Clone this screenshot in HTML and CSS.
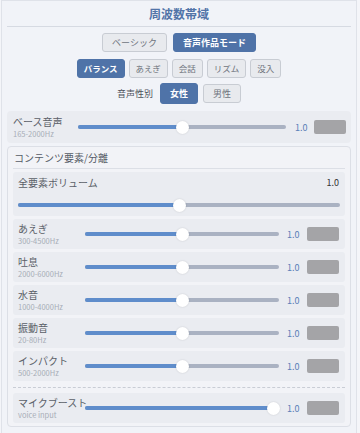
FILE: index.html
```html
<!DOCTYPE html>
<html lang="ja">
<head>
    <meta charset="UTF-8">
    <meta name="viewport" content="width=device-width, initial-scale=1.0">
    <title>周波数帯域</title>
    <link rel="stylesheet" href="styles.css">
</head>
<body>

    <div class="panel">
        <h2 class="title">周波数帯域</h2>

        <div class="btn-row row-mode">
            <button class="btn">ベーシック</button>
            <button class="btn active">音声作品モード</button>
        </div>

        <div class="btn-row row-preset">
            <button class="btn small active">バランス</button>
            <button class="btn small">あえぎ</button>
            <button class="btn small">会話</button>
            <button class="btn small">リズム</button>
            <button class="btn small">没入</button>
        </div>

        <div class="btn-row row-gender">
            <span class="row-label">音声性別</span>
            <button class="btn tall active">女性</button>
            <button class="btn">男性</button>
        </div>

        <div class="band band-base">
            <div class="band-name">
                <div class="band-label">ベース音声</div>
                <div class="band-range">165-2000Hz</div>
            </div>
            <div class="slider" style="--p:.5"><div class="slider-fill"></div><div class="slider-thumb"></div></div>
            <span class="band-value">1.0</span>
            <span class="swatch"></span>
        </div>

        <section class="group">
            <div class="group-title">コンテンツ要素/分離</div>

            <div class="master">
                <div class="master-head">
                    <span class="band-label">全要素ボリューム</span>
                    <span class="master-value">1.0</span>
                </div>
                <div class="slider" style="--p:.5"><div class="slider-fill"></div><div class="slider-thumb"></div></div>
            </div>

            <div class="band">
                <div class="band-name">
                    <div class="band-label">あえぎ</div>
                    <div class="band-range">300-4500Hz</div>
                </div>
                <div class="slider" style="--p:.5"><div class="slider-fill"></div><div class="slider-thumb"></div></div>
                <span class="band-value">1.0</span>
                <span class="swatch"></span>
            </div>

            <div class="band">
                <div class="band-name">
                    <div class="band-label">吐息</div>
                    <div class="band-range">2000-6000Hz</div>
                </div>
                <div class="slider" style="--p:.5"><div class="slider-fill"></div><div class="slider-thumb"></div></div>
                <span class="band-value">1.0</span>
                <span class="swatch"></span>
            </div>

            <div class="band">
                <div class="band-name">
                    <div class="band-label">水音</div>
                    <div class="band-range">1000-4000Hz</div>
                </div>
                <div class="slider" style="--p:.5"><div class="slider-fill"></div><div class="slider-thumb"></div></div>
                <span class="band-value">1.0</span>
                <span class="swatch"></span>
            </div>

            <div class="band">
                <div class="band-name">
                    <div class="band-label">振動音</div>
                    <div class="band-range">20-80Hz</div>
                </div>
                <div class="slider" style="--p:.5"><div class="slider-fill"></div><div class="slider-thumb"></div></div>
                <span class="band-value">1.0</span>
                <span class="swatch"></span>
            </div>

            <div class="band">
                <div class="band-name">
                    <div class="band-label">インパクト</div>
                    <div class="band-range">500-2000Hz</div>
                </div>
                <div class="slider" style="--p:.5"><div class="slider-fill"></div><div class="slider-thumb"></div></div>
                <span class="band-value">1.0</span>
                <span class="swatch"></span>
            </div>

            <div class="dash"></div>

            <div class="band">
                <div class="band-name">
                    <div class="band-label">マイクブースト</div>
                    <div class="band-range">voice input</div>
                </div>
                <div class="slider" style="--p:1"><div class="slider-fill"></div><div class="slider-thumb"></div></div>
                <span class="band-value">1.0</span>
                <span class="swatch"></span>
            </div>
        </section>
    </div>

</body>
</html>
```

FILE: styles.css
```css
* { box-sizing: border-box; }
body {
    margin: 0;
    background: #f4f5f9;
    font-family: "Noto Sans CJK JP", "Noto Sans", sans-serif;
    color: #555b66;
}
.panel {
    width: 356px;
    height: 433px;
    margin-left: 1px;
    padding: 0 5px;
    background: #f1f3f8;
    border: 1px solid #dfe2e9;
    border-bottom: none;
}
.title {
    margin: 0;
    height: 26px;
    line-height: 25px;
    font-size: 12px;
    font-weight: 700;
    text-align: center;
    color: #5274a8;
    border-bottom: 1px solid #d6dae2;
}
.btn-row {
    display: flex;
    justify-content: center;
    align-items: center;
}
.row-mode { margin-top: 6px; gap: 6px; }
.row-preset { margin-top: 7px; gap: 4px; }
.row-gender { margin-top: 5px; gap: 5px; }
.row-label {
    font-size: 9px;
    color: #4c515a;
    margin-right: 2px;
}
.btn {
    height: 19px;
    padding: 0 9px;
    font-family: inherit;
    font-size: 9px;
    line-height: 17px;
    color: #6f747d;
    background: #e8eaee;
    border: 1px solid #c8ccd3;
    border-radius: 3px;
}
.btn.small { padding: 0 6px; font-size: 8.5px; }
.btn.tall { height: 21px; }
.btn.active {
    background: #4f73a8;
    border-color: #4f73a8;
    color: #fff;
    font-weight: 700;
}

/* band rows */
.band {
    display: flex;
    align-items: center;
    height: 30px;
    margin-top: 3px;
    padding: 0 6px 0 5px;
    background: #eaecf1;
    border-radius: 3px;
}
.band-name {
    width: 67px;
    flex: none;
    white-space: nowrap;
}
.band-label {
    font-size: 10px;
    line-height: 12px;
    color: #5a5f68;
}
.band-range {
    font-size: 7.5px;
    line-height: 11px;
    color: #a7adb7;
}
.band-value {
    width: 13px;
    margin-left: 8px;
    font-size: 9px;
    color: #5a80b8;
}
.swatch {
    width: 32px;
    height: 14px;
    margin-left: 7px;
    background: #a4a4a7;
    border-radius: 2px;
}
.band-base {
    height: 32px;
    margin-top: 7px;
    padding: 0 5px 0 6px;
    border-radius: 4px;
}
.band-base .band-name { width: 65px; }
.band-base .band-value { margin-left: 9px; }
.band-base .swatch { margin-left: 6px; }

/* slider */
.slider {
    position: relative;
    flex: 1;
    height: 4px;
    border-radius: 2px;
    background: #aab2c2;
}
.slider-fill {
    width: calc(6px + (100% - 12px) * var(--p));
    height: 100%;
    border-radius: 2px;
    background: #5f8dcb;
}
.slider-thumb {
    position: absolute;
    top: 50%;
    left: calc(6px + (100% - 12px) * var(--p));
    width: 13px;
    height: 13px;
    margin: -6.5px 0 0 -6.5px;
    border-radius: 50%;
    background: #fff;
    box-shadow: 0 0 2px rgba(0, 0, 0, 0.15);
}

/* content group */
.group {
    margin-top: 3px;
    padding: 0 5px 3px;
    background: #f2f3f7;
    border: 1px solid #dcdfe6;
    border-radius: 4px;
}
.group-title {
    height: 22px;
    line-height: 22px;
    padding-left: 1px;
    font-size: 10px;
    color: #555b66;
    border-bottom: 1px solid #dcdfe6;
}
.master {
    margin-top: 3px;
    padding: 5px 5px 4px;
    background: #eaecf1;
    border-radius: 3px;
}
.master-head {
    display: flex;
    justify-content: space-between;
    line-height: 12px;
    margin-bottom: 14px;
}
.master-value {
    font-size: 9px;
    color: #333;
    margin-right: 1px;
}
.master .slider { margin-bottom: 5px; }
.dash {
    margin: 6px 0 5px;
    border-top: 1px dashed #c9cdd5;
}
```
